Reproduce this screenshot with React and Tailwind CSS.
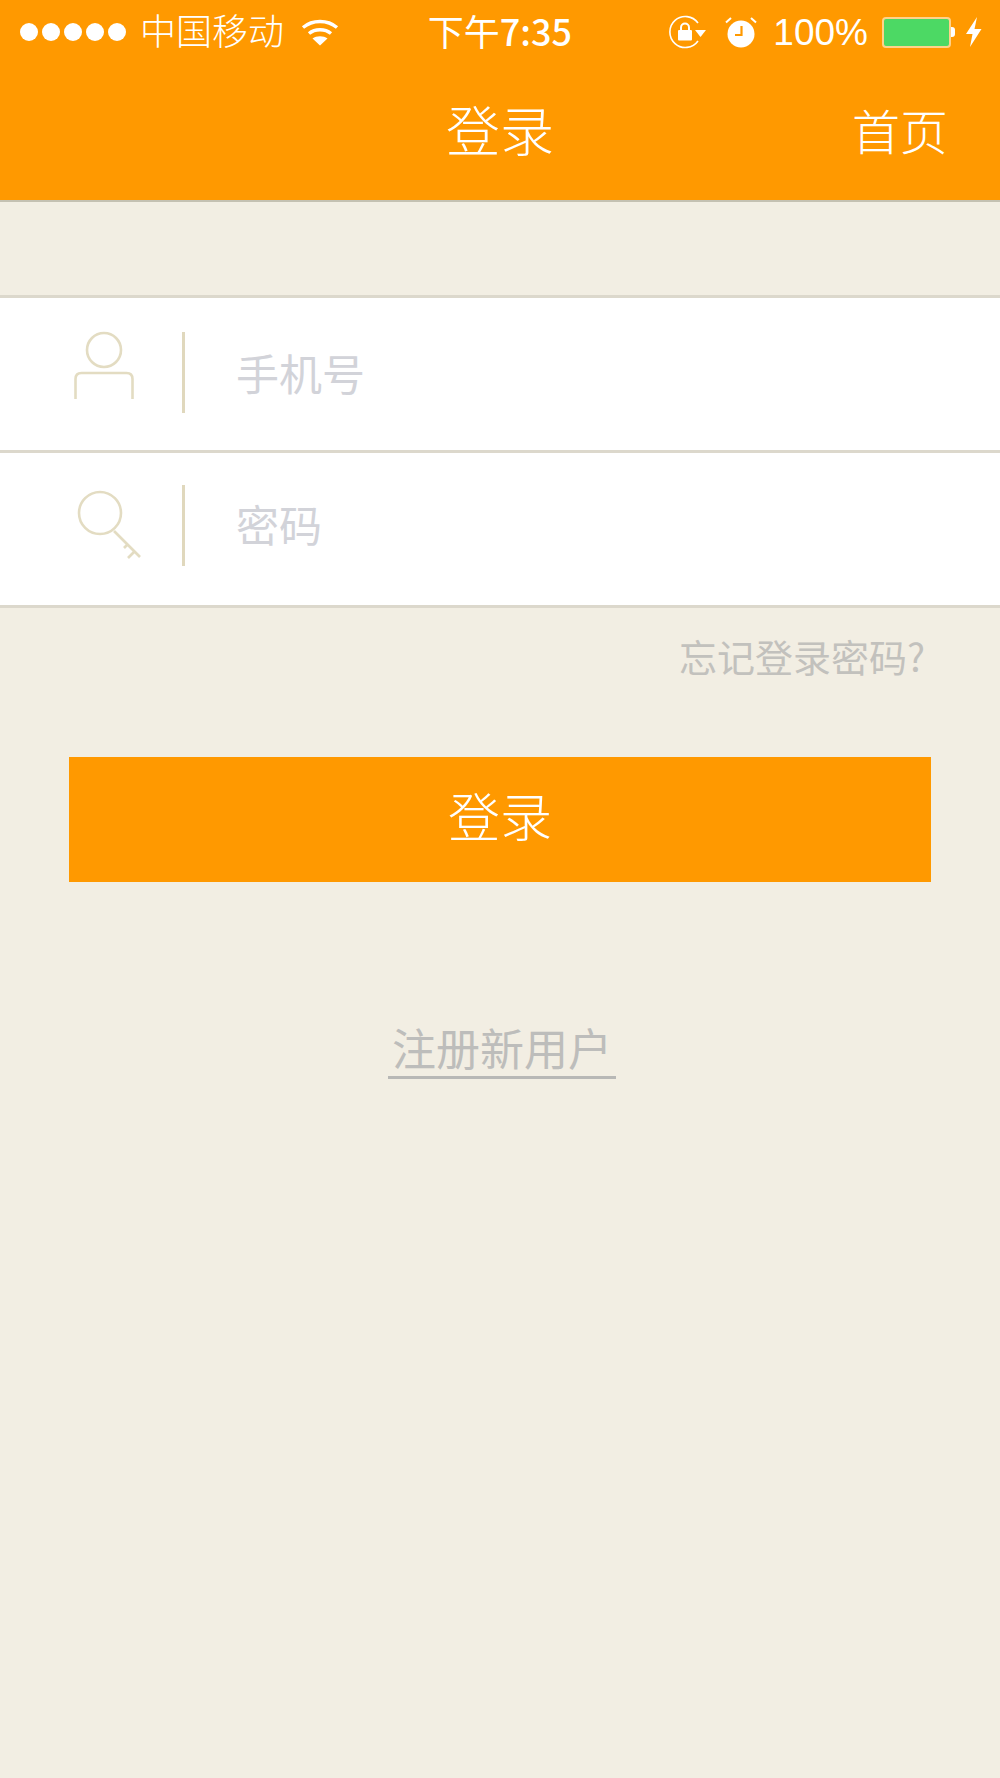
const FONT = "font-['Noto_Sans_CJK_SC','Noto_Sans',sans-serif]";

const SignalDots = () => (
  <div className="flex shrink-0 gap-[4px]">
    {[0, 1, 2, 3, 4].map((i) => (
      <span key={i} className="h-[18px] w-[18px] rounded-full bg-white" />
    ))}
  </div>
);

const Wifi = () => (
  <svg width="38" height="28" viewBox="0 0 38 28" fill="none" stroke="#fff" strokeWidth="3.4">
    <path d="M2 9.5C11.5 1.5 26.5 1.5 36 9.5" />
    <path d="M8 15.5C14 10.5 24 10.5 30 15.5" />
    <path d="M19 27.5L11.5 20.5C15.5 17.5 22.5 17.5 26.5 20.5Z" fill="#fff" stroke="none" />
  </svg>
);

const RotationLock = () => (
  <svg width="38" height="34" viewBox="0 0 38 34" fill="none">
    <path d="M30 26A15.5 15.5 0 1 1 30 8" stroke="#fff" strokeWidth="1.6" />
    <path d="M27 15H38L32.5 22Z" fill="#fff" />
    <rect x="10" y="15" width="14" height="10.5" rx="1" fill="#fff" />
    <path d="M13 15.5V12.5A4 4 0 0 1 21 12.5V15.5" stroke="#fff" strokeWidth="2" />
  </svg>
);

const Alarm = () => (
  <svg width="32" height="32" viewBox="0 0 32 32" fill="none">
    <circle cx="16" cy="18" r="13.5" fill="#fff" />
    <path d="M16.5 10V19H10" stroke="#ff9900" strokeWidth="2.2" />
    <path d="M1 6.5L6 2" stroke="#fff" strokeWidth="2" />
    <path d="M31 6.5L26 2" stroke="#fff" strokeWidth="2" />
  </svg>
);

const Bolt = () => (
  <svg width="17" height="30" viewBox="0 0 17 30" fill="#fff">
    <path d="M12 0L1 17H7.5L5 30L16.5 12H9.5Z" />
  </svg>
);

const Battery = () => (
  <div className="flex items-center">
    <div className="h-[31px] w-[69px] rounded-[4px] border-[2px] border-[#ffd28a] bg-[#4cd964]" />
    <div className="h-[10px] w-[4px] rounded-r-[3px] bg-white" />
  </div>
);

const UserIcon = () => (
  <svg width="60" height="72" viewBox="0 6 60 72" fill="none" stroke="#e3dcc2" strokeWidth="2.6" className="overflow-visible">
    <circle cx="30" cy="19" r="17" />
    <path d="M1.5 68V48Q1.5 42 7.5 42H52.5Q58.5 42 58.5 48V68" />
  </svg>
);

const KeyIcon = () => (
  <svg width="66" height="72" viewBox="0 0 66 72" fill="none" stroke="#e3dcc2" strokeWidth="2.6">
    <circle cx="24" cy="23" r="21" />
    <path d="M38 41L64 67" />
    <path d="M48 58L52 54" />
    <path d="M52 68L58 62" />
  </svg>
);

const Row = ({ icon, iconClass, rowClass, labelClass, label }) => (
  <div className={`flex h-[155px] items-center border-b-[3px] border-[#dcd8cc] bg-white ${rowClass}`}>
    <div className={`flex w-[182px] ${iconClass}`}>{icon}</div>
    <div className="h-[81px] w-[3px] bg-[#e0d8bd]" />
    <span className={`ml-[51px] text-[43px] leading-none text-[#d2d3d9] ${labelClass}`}>{label}</span>
  </div>
);

export default function App() {
  return (
    <div className={`${FONT} flex min-h-[1778px] flex-col bg-[#f2eee3]`}>
      <header className="h-[202px] border-b-[2px] border-[#c4c1b2] bg-[#ff9900] text-white">
        <div className="grid h-[64px] grid-cols-3 items-center">
          <div className="flex items-center pl-[20px]">
            <SignalDots />
            <span className="ml-[14px] pb-[6px] text-[36px] leading-none font-light whitespace-nowrap">中国移动</span>
            <span className="ml-[17px] shrink-0">
              <Wifi />
            </span>
          </div>
          <div className="pb-[4px] text-center text-[36px] leading-none whitespace-nowrap">
            下午<span className="font-medium">7:35</span>
          </div>
          <div className="flex items-center justify-end pr-[18px]">
            <RotationLock />
            <span className="ml-[19px]">
              <Alarm />
            </span>
            <span className="ml-[16px] font-['Liberation_Sans',sans-serif] text-[37px] leading-none font-light">
              100%
            </span>
            <span className="ml-[14px]">
              <Battery />
            </span>
            <span className="ml-[10px]">
              <Bolt />
            </span>
          </div>
        </div>
        <div className="grid h-[130px] grid-cols-3 items-center">
          <div />
          <div className="text-center text-[54px] leading-none font-light">登录</div>
          <div className="pr-[52px] text-right text-[48px] leading-none font-light">首页</div>
        </div>
      </header>

      <main className="mt-[93px] flex flex-col">
        <div className="border-t-[3px] border-[#dcd8cc]">
          <Row icon={<UserIcon />} iconClass="pl-[74px]" rowClass="pb-[3px]" labelClass="" label="手机号" />
          <Row icon={<KeyIcon />} iconClass="pl-[76px]" rowClass="pb-[7px]" labelClass="pb-[4px]" label="密码" />
        </div>

        <div className="mt-[29px] pr-[75px] text-right text-[38px] leading-none text-[#c2c1bd]">
          忘记登录密码?
        </div>

        <button className="mx-[69px] mt-[82px] h-[125px] bg-[#ff9900] pb-[9px] text-[52px] leading-none font-light text-white">
          登录
        </button>

        <div className="mt-[143px] flex justify-center pl-[4px]">
          <span className="w-[228px] border-b-[3px] border-[#b8b8b6] pb-[7px] text-center text-[44px] leading-none text-[#bdbdbb]">
            注册新用户
          </span>
        </div>
      </main>
    </div>
  );
}
